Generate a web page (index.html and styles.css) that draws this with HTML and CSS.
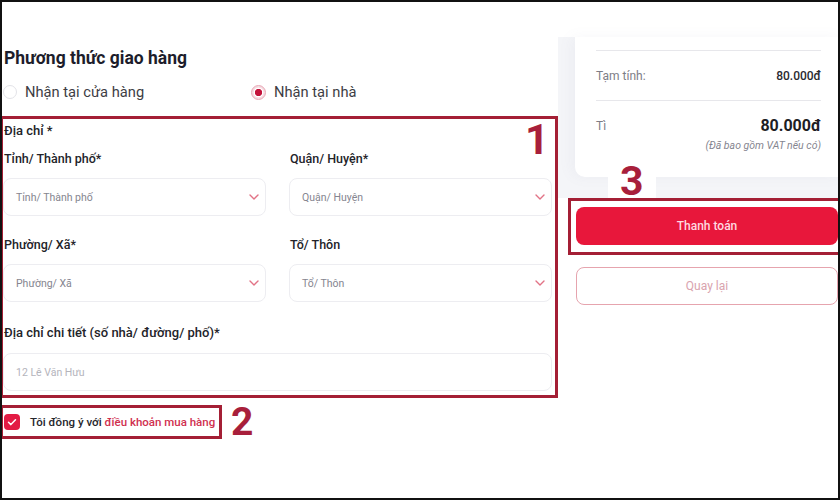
FILE: index.html
```html
<!DOCTYPE html>
<html lang="vi">
<head>
<meta charset="utf-8">
<title>Thanh toán</title>
<link rel="stylesheet" href="styles.css">
</head>
<body>
<div class="frame">
  <div class="page">
    <section class="left">
      <h2 class="title">Phương thức giao hàng</h2>
      <div class="radios">
        <label class="radio"><span class="dot"></span>Nhận tại cửa hàng</label>
        <label class="radio checked"><span class="dot"></span>Nhận tại nhà</label>
      </div>

      <div class="mark mark-1">
        <div class="section-label">Địa chỉ *</div>
        <div class="grid">
          <div class="field">
            <div class="label">Tỉnh/ Thành phố*</div>
            <div class="select"><span>Tỉnh/ Thành phố</span><svg class="chev" width="10" height="6" viewBox="0 0 10 6"><path d="M1 1l4 4 4-4"/></svg></div>
          </div>
          <div class="field">
            <div class="label">Quận/ Huyện*</div>
            <div class="select"><span>Quận/ Huyện</span><svg class="chev" width="10" height="6" viewBox="0 0 10 6"><path d="M1 1l4 4 4-4"/></svg></div>
          </div>
          <div class="field">
            <div class="label">Phường/ Xã*</div>
            <div class="select"><span>Phường/ Xã</span><svg class="chev" width="10" height="6" viewBox="0 0 10 6"><path d="M1 1l4 4 4-4"/></svg></div>
          </div>
          <div class="field">
            <div class="label">Tổ/ Thôn</div>
            <div class="select"><span>Tổ/ Thôn</span><svg class="chev" width="10" height="6" viewBox="0 0 10 6"><path d="M1 1l4 4 4-4"/></svg></div>
          </div>
        </div>
        <div class="field full">
          <div class="label">Địa chỉ chi tiết (số nhà/ đường/ phố)*</div>
          <div class="select input"><span>12 Lê Văn Hưu</span></div>
        </div>
        <span class="num num-1">1</span>
      </div>

      <div class="agree-row">
        <div class="mark mark-2">
          <span class="check"><svg width="16" height="16" viewBox="0 0 16 16"><path d="M4.5 8.3l2.4 2.3 4.6-4.8"/></svg></span>
          <span class="agree-text">Tôi đồng ý với <span class="link">điều khoản mua hàng</span></span>
        </div>
        <span class="num num-2">2</span>
      </div>
    </section>

    <aside class="right">
      <div class="panel">
        <div class="card">
          <div class="hr"></div>
          <div class="row">
            <span class="muted">Tạm tính:</span>
            <span class="amount">80.000đ</span>
          </div>
          <div class="hr"></div>
          <div class="row total">
            <span class="muted">Tì</span>
            <span class="amount big">80.000đ</span>
          </div>
          <div class="vat">(Đã bao gồm VAT nếu có)</div>
        </div>
      </div>
      <div class="mark mark-3">
        <button class="pay">Thanh toán</button>
      </div>
      <button class="back">Quay lại</button>
      <div class="patch"></div>
      <span class="num num-3">3</span>
    </aside>
  </div>
  <div class="frame-border"></div>
</div>
</body>
</html>
```

FILE: styles.css
```css
html, body {
  margin: 0;
  padding: 0;
  background: #fff;
}

.frame {
  position: relative;
  width: 840px;
  height: 500px;
  overflow: hidden;
  background: #fff;
  font-family: Roboto, "Noto Sans", "Liberation Sans", sans-serif;
  color: #222;
}

.frame-border {
  position: absolute;
  inset: 0;
  border: 2px solid #111;
  pointer-events: none;
}

.page {
  display: flex;
  height: 100%;
}

.left {
  width: 558px;
  flex: none;
  padding-top: 47px;
  box-sizing: border-box;
}

.title {
  margin: 0 0 0 4px;
  font-size: 17.5px;
  line-height: 22px;
  font-weight: 700;
  color: #1d1d2b;
}

.radios {
  display: grid;
  grid-template-columns: 248px auto;
  margin-top: 13px;
  padding-left: 3px;
}

.radio {
  display: flex;
  align-items: center;
  gap: 8px;
  font-size: 14.7px;
  line-height: 20px;
  color: #3d3d44;
}

.dot {
  width: 14px;
  height: 14px;
  border-radius: 50%;
  border: 1px solid #e3e3e8;
  box-sizing: border-box;
  background: #fff;
}

.checked .dot {
  width: 15px;
  height: 15px;
  border: 1.5px solid #e8a7b5;
  background: radial-gradient(circle, #c3133b 0 3.4px, #fff 3.9px 4.6px, #f6dbe1 5.2px);
}

.mark {
  border: 3px solid #a41f35;
  box-sizing: border-box;
}

.mark-1 {
  position: relative;
  margin-top: 14px;
  padding: 3px 3px 4px 0;
}

.section-label,
.label {
  font-size: 12.5px;
  line-height: 18px;
  font-weight: 500;
  color: #232329;
  padding-left: 1px;
}

.section-label {
  font-size: 13px;
}

.grid {
  display: grid;
  grid-template-columns: 263px 263px;
  column-gap: 23px;
  row-gap: 20px;
  margin-top: 10px;
}

.label {
  margin-bottom: 10px;
}

.select {
  height: 38px;
  border: 1px solid #ededf1;
  border-radius: 8px;
  box-sizing: border-box;
  display: flex;
  align-items: center;
  justify-content: space-between;
  padding: 0 6px 0 12px;
  font-size: 10.5px;
  color: #85858f;
  background: #fff;
}

.input {
  color: #b4b4bc;
}

.chev path {
  fill: none;
  stroke: #e27386;
  stroke-width: 1.4;
  stroke-linecap: round;
  stroke-linejoin: round;
}

.full {
  margin-top: 22px;
  width: 549px;
}

.full .label {
  margin-bottom: 11px;
  font-size: 13px;
}

.num {
  font-family: Roboto, "Liberation Sans", sans-serif;
  font-weight: 700;
  color: #a81f3b;
}

.num-1 {
  position: absolute;
  top: 0;
  left: 522px;
  font-size: 42px;
  line-height: 42px;
}

.agree-row {
  display: flex;
  align-items: flex-start;
  margin-top: 7px;
}

.mark-2 {
  width: 222px;
  height: 34px;
  display: flex;
  align-items: center;
  padding-left: 1px;
}

.check {
  width: 16px;
  height: 16px;
  border-radius: 4px;
  background: #e31b44;
  flex: none;
}

.check svg {
  display: block;
}

.check path {
  fill: none;
  stroke: #fff;
  stroke-width: 1.5;
  stroke-linecap: round;
  stroke-linejoin: round;
}

.agree-text {
  margin-left: 10px;
  font-size: 11.5px;
  font-weight: 500;
  color: #26262c;
  white-space: nowrap;
}

.link {
  color: #d0304f;
}

.num-2 {
  margin: -2px 0 0 9px;
  font-size: 39px;
  line-height: 38px;
}

.right {
  position: relative;
  flex: 1;
}

.panel {
  margin-top: 37px;
  background: #f4f5f8;
  padding: 0 0 21px 17px;
}

.card {
  background: #fff;
  border-radius: 0 0 0 10px;
  padding: 13px 22px 24px 21px;
  box-shadow: -4px 0 14px rgba(120, 125, 150, 0.06);
}

.hr {
  height: 1px;
  background: #e7e7eb;
}

.row {
  display: flex;
  justify-content: space-between;
  align-items: center;
  height: 49px;
  font-size: 12px;
}

.muted {
  color: #7d7d86;
}

.amount {
  font-weight: 500;
  color: #2a2a30;
}

.row.total {
  height: 20px;
  margin-top: 15px;
}

.amount.big {
  font-size: 16px;
  line-height: 20px;
  font-weight: 700;
  color: #1e1e24;
}

.vat {
  margin-top: 3px;
  text-align: right;
  font-size: 10.5px;
  line-height: 14px;
  font-style: italic;
  color: #85858f;
}

.mark-3 {
  margin-left: 10px;
  width: 275px;
  padding: 6px 5px 7px;
}

.pay,
.back {
  display: block;
  width: 262px;
  height: 38px;
  border-radius: 8px;
  font-family: Roboto, "Noto Sans", sans-serif;
  font-size: 12px;
  cursor: pointer;
}

.pay {
  border: none;
  background: #e8173b;
  color: #ffd9e0;
  font-weight: 500;
}

.back {
  margin: 12px 0 0 18px;
  border: 1px solid #e6a4ae;
  background: #fff;
  color: #d9a3ae;
}

.patch {
  position: absolute;
  left: 50px;
  top: 163px;
  width: 48px;
  height: 35px;
  background: #fff;
}

.num-3 {
  position: absolute;
  left: 62px;
  top: 162px;
  font-size: 41px;
  line-height: 39px;
}
```
